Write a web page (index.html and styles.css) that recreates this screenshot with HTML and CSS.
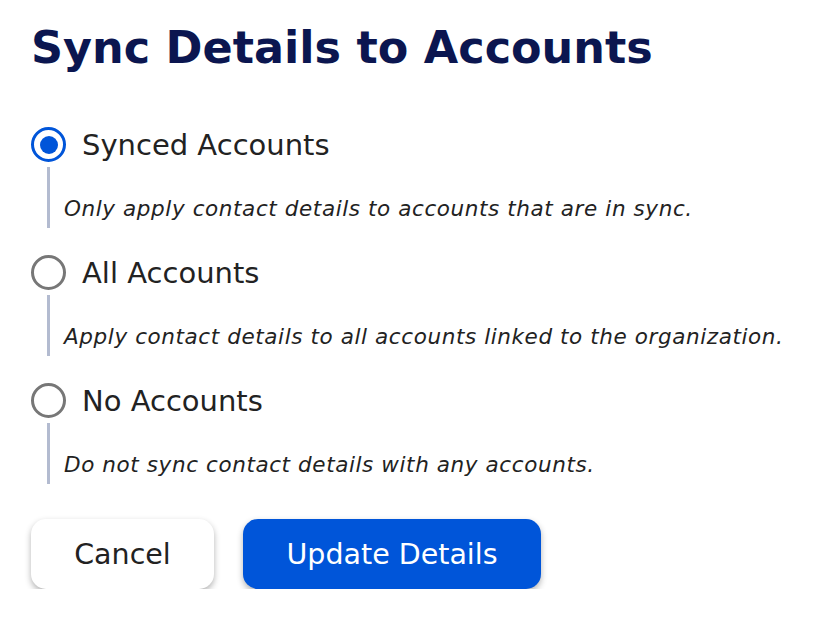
FILE: index.html
```html
<!DOCTYPE html>
<html lang="en">
<head>
    <meta charset="UTF-8">
    <meta name="viewport" content="width=device-width, initial-scale=1.0">
    <title>Sync Details to Accounts</title>
    <link rel="stylesheet" href="styles.css">
</head>
<body>
    <div class="container">
        <h2>Sync Details to Accounts</h2>

        <div class="options">
            <label class="option">
                <span class="option-head">
                    <input type="radio" name="sync" value="synced" checked>
                    <span class="radio"></span>
                    <span class="option-title">Synced Accounts</span>
                </span>
                <span class="option-desc">Only apply contact details to accounts that are in sync.</span>
            </label>

            <label class="option">
                <span class="option-head">
                    <input type="radio" name="sync" value="all">
                    <span class="radio"></span>
                    <span class="option-title">All Accounts</span>
                </span>
                <span class="option-desc">Apply contact details to all accounts linked to the organization.</span>
            </label>

            <label class="option">
                <span class="option-head">
                    <input type="radio" name="sync" value="none">
                    <span class="radio"></span>
                    <span class="option-title">No Accounts</span>
                </span>
                <span class="option-desc">Do not sync contact details with any accounts.</span>
            </label>
        </div>

        <div class="actions">
            <button class="btn btn-cancel">Cancel</button>
            <button class="btn btn-primary">Update Details</button>
        </div>
    </div>
</body>
</html>
```

FILE: styles.css
```css
body {
    font-family: "DejaVu Sans", Verdana, sans-serif;
    background-color: #fff;
    color: #222;
    margin: 0;
    padding: 0;
}
.container {
    padding: 22px 0 0 31px;
}
h2 {
    color: #0b1650;
    font-size: 44.5px;
    font-weight: 700;
    line-height: 52px;
    margin: 0 0 53px 0;
}
.options {
    display: flex;
    flex-direction: column;
    gap: 27px;
}
.option {
    display: flex;
    flex-direction: column;
    cursor: pointer;
}
.option-head {
    display: flex;
    align-items: center;
    gap: 16px;
    height: 35px;
}
.option input {
    display: none;
}
.radio {
    width: 35px;
    height: 35px;
    box-sizing: border-box;
    border: 3px solid #777;
    border-radius: 50%;
    display: flex;
    align-items: center;
    justify-content: center;
    flex-shrink: 0;
}
.option input:checked + .radio {
    border-color: #0055d9;
}
.option input:checked + .radio::after {
    content: "";
    width: 18px;
    height: 18px;
    border-radius: 50%;
    background-color: #0055d9;
}
.option-title {
    font-size: 29px;
    color: #222;
}
.option-desc {
    margin: 5px 0 0 16px;
    height: 61px;
    box-sizing: border-box;
    border-left: 3px solid #b3bbd0;
    padding: 30px 0 0 14px;
    font-size: 21.5px;
    font-style: italic;
    letter-spacing: 0.6px;
    line-height: 24px;
    color: #222;
    white-space: nowrap;
}
.actions {
    display: flex;
    gap: 29px;
    margin-top: 35px;
}
.btn {
    font-family: inherit;
    font-size: 28.5px;
    height: 70px;
    border: none;
    border-radius: 15px;
    cursor: pointer;
    box-shadow: 0 3px 6px rgba(0, 0, 0, 0.3);
}
.btn-cancel {
    background-color: #fff;
    color: #222;
    width: 183px;
}
.btn-primary {
    background-color: #0055d9;
    color: #fff;
    width: 298px;
}
.btn-primary:hover {
    background-color: #004bc0;
}
```
